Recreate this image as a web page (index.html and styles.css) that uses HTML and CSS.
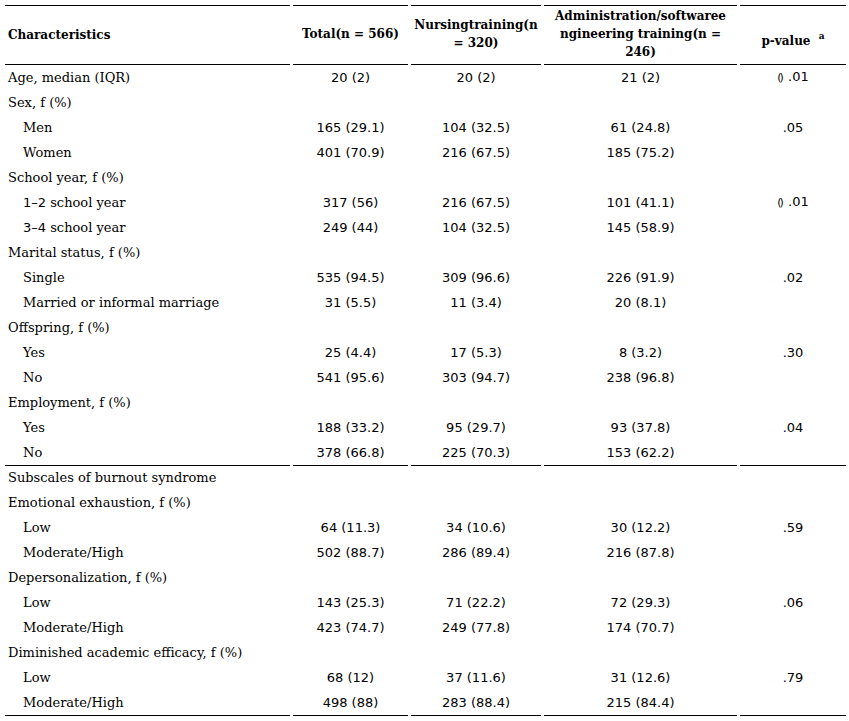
FILE: index.html
```html
<!DOCTYPE html>
<html>
<head>
<meta charset="utf-8">
<link rel="stylesheet" href="styles.css">
</head>
<body>
<table class="stats">
  <colgroup>
    <col class="c1"><col class="c2"><col class="c3"><col class="c4"><col class="c5">
  </colgroup>
  <thead>
    <tr class="head">
      <th class="lbl">Characteristics</th>
      <th>Total(n = 566)</th>
      <th>Nursingtraining(n = 320)</th>
      <th>Administration/softwaree ngineering training(n = 246)</th>
      <th class="pv">p-value <sup>a</sup></th>
    </tr>
  </thead>
  <tbody>
    <tr><td class="lbl">Age, median (IQR)</td><td class="num">20 (2)</td><td class="num">20 (2)</td><td class="num">21 (2)</td><td class="num"><span class="lt">()</span> .01</td></tr>
    <tr><td class="lbl">Sex, f (%)</td><td></td><td></td><td></td><td></td></tr>
    <tr><td class="lbl sub">Men</td><td class="num">165 (29.1)</td><td class="num">104 (32.5)</td><td class="num">61 (24.8)</td><td class="num">.05</td></tr>
    <tr><td class="lbl sub">Women</td><td class="num">401 (70.9)</td><td class="num">216 (67.5)</td><td class="num">185 (75.2)</td><td></td></tr>
    <tr><td class="lbl">School year, f (%)</td><td></td><td></td><td></td><td></td></tr>
    <tr><td class="lbl sub"><span class="dig">1–2</span> school year</td><td class="num">317 (56)</td><td class="num">216 (67.5)</td><td class="num">101 (41.1)</td><td class="num"><span class="lt">()</span> .01</td></tr>
    <tr><td class="lbl sub"><span class="dig">3–4</span> school year</td><td class="num">249 (44)</td><td class="num">104 (32.5)</td><td class="num">145 (58.9)</td><td></td></tr>
    <tr><td class="lbl">Marital status, f (%)</td><td></td><td></td><td></td><td></td></tr>
    <tr><td class="lbl sub">Single</td><td class="num">535 (94.5)</td><td class="num">309 (96.6)</td><td class="num">226 (91.9)</td><td class="num">.02</td></tr>
    <tr><td class="lbl sub">Married or informal marriage</td><td class="num">31 (5.5)</td><td class="num">11 (3.4)</td><td class="num">20 (8.1)</td><td></td></tr>
    <tr><td class="lbl">Offspring, f (%)</td><td></td><td></td><td></td><td></td></tr>
    <tr><td class="lbl sub">Yes</td><td class="num">25 (4.4)</td><td class="num">17 (5.3)</td><td class="num">8 (3.2)</td><td class="num">.30</td></tr>
    <tr><td class="lbl sub">No</td><td class="num">541 (95.6)</td><td class="num">303 (94.7)</td><td class="num">238 (96.8)</td><td></td></tr>
    <tr><td class="lbl">Employment, f (%)</td><td></td><td></td><td></td><td></td></tr>
    <tr><td class="lbl sub">Yes</td><td class="num">188 (33.2)</td><td class="num">95 (29.7)</td><td class="num">93 (37.8)</td><td class="num">.04</td></tr>
    <tr><td class="lbl sub">No</td><td class="num">378 (66.8)</td><td class="num">225 (70.3)</td><td class="num">153 (62.2)</td><td></td></tr>
    <tr class="sep"><td class="lbl">Subscales of burnout syndrome</td><td></td><td></td><td></td><td></td></tr>
    <tr><td class="lbl">Emotional exhaustion, f (%)</td><td></td><td></td><td></td><td></td></tr>
    <tr><td class="lbl sub">Low</td><td class="num">64 (11.3)</td><td class="num">34 (10.6)</td><td class="num">30 (12.2)</td><td class="num">.59</td></tr>
    <tr><td class="lbl sub">Moderate/High</td><td class="num">502 (88.7)</td><td class="num">286 (89.4)</td><td class="num">216 (87.8)</td><td></td></tr>
    <tr><td class="lbl">Depersonalization, f (%)</td><td></td><td></td><td></td><td></td></tr>
    <tr><td class="lbl sub">Low</td><td class="num">143 (25.3)</td><td class="num">71 (22.2)</td><td class="num">72 (29.3)</td><td class="num">.06</td></tr>
    <tr><td class="lbl sub">Moderate/High</td><td class="num">423 (74.7)</td><td class="num">249 (77.8)</td><td class="num">174 (70.7)</td><td></td></tr>
    <tr><td class="lbl">Diminished academic efficacy, f (%)</td><td></td><td></td><td></td><td></td></tr>
    <tr><td class="lbl sub">Low</td><td class="num">68 (12)</td><td class="num">37 (11.6)</td><td class="num">31 (12.6)</td><td class="num">.79</td></tr>
    <tr class="last"><td class="lbl sub">Moderate/High</td><td class="num">498 (88)</td><td class="num">283 (88.4)</td><td class="num">215 (84.4)</td><td></td></tr>
  </tbody>
</table>
</body>
</html>
```

FILE: styles.css
```css
html, body {
  margin: 0;
  padding: 0;
  background: #ffffff;
}

body {
  padding: 5px 0 0 2px;
  color: #000000;
  font-family: "DejaVu Serif", "Liberation Serif", serif;
  font-size: 13px;
}

.stats {
  border-collapse: separate;
  border-spacing: 3px 0;
  table-layout: fixed;
  width: 847px;
}

.c1 { width: 285px; }
.c2 { width: 115px; }
.c3 { width: 130px; }
.c4 { width: 193px; }
.c5 { width: 106px; }

.stats tr.head {
  height: 60px;
}

.stats tbody tr {
  height: 25px;
}

.stats tbody tr.last {
  height: 26px;
}

.stats th {
  font-weight: bold;
  font-size: 12px;
  line-height: 18px;
  text-align: center;
  vertical-align: middle;
  padding: 0 3px 2px 3px;
  border-top: 1px solid #000;
  border-bottom: 1px solid #000;
}

.stats th.lbl {
  text-align: left;
  padding-bottom: 0;
}

.stats th.pv {
  padding-top: 6px;
  padding-bottom: 0;
}

.stats th sup {
  font-size: 9px;
  vertical-align: 6px;
  margin-left: 4px;
}

.stats td {
  padding: 0 3px;
  text-align: center;
  vertical-align: middle;
  white-space: nowrap;
  line-height: 16px;
}

.stats td.num {
  font-family: "DejaVu Sans", "Liberation Sans", sans-serif;
  font-size: 13px;
}

.stats td.lbl {
  text-align: left;
}

.stats td.sub {
  padding-left: 18px;
}

.dig {
  font-family: "DejaVu Sans", "Liberation Sans", sans-serif;
}

.stats tr.sep td {
  border-top: 1px solid #000;
}

.stats tr.last td {
  border-bottom: 1px solid #000;
}

.lt {
  font-size: 11px;
  letter-spacing: -2px;
  margin-right: 2px;
}
```
